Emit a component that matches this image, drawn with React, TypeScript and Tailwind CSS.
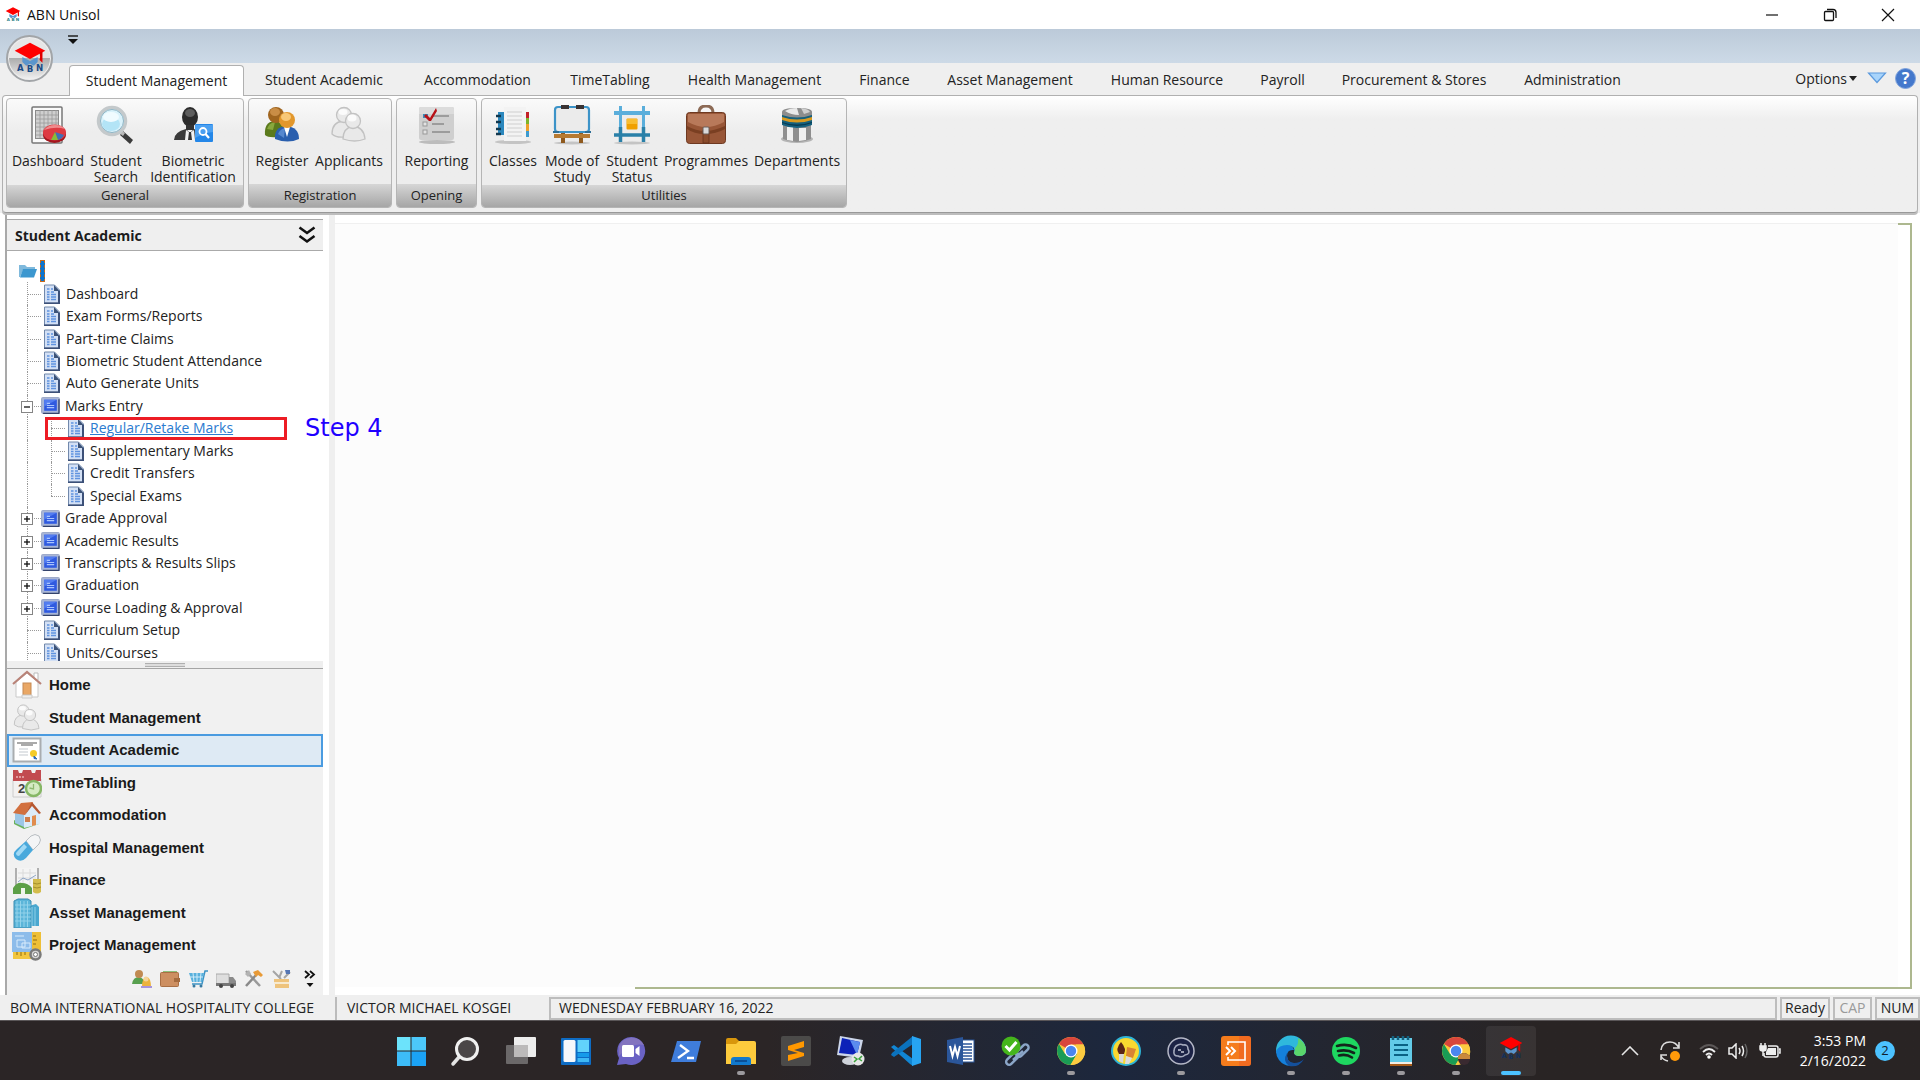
import React, { ReactNode } from "react";

const UI = "font-['Open_Sans','Noto_Sans',sans-serif]";

/* ---------- brand ---------- */

function CapLogo({ className, letters = "#1b4a86" }: { className: string; letters?: string }) {
  return (
    <svg viewBox="0 0 48 48" className={className} aria-hidden="true">
      <path d="M16 22l8 4 8-4v5l-4 4-4-2-4 2-4-4z" fill="#5b95cc" />
      <path d="M24 7L40 15.500 24 24 8 15.500z" fill="#ff0000" />
      <path d="M34 17q1 5 0 8l3 3V16z" fill="#e00000" />
      <g fontSize="9" fontWeight="bold" fontFamily="DejaVu Sans, sans-serif" fill={letters} textAnchor="middle">
        <text x="14" y="36">A</text>
        <text x="24" y="38">B</text>
        <text x="34" y="36">N</text>
      </g>
    </svg>
  );
}

/* ---------- ribbon icons (40 x 40) ---------- */

function Svg40({ children }: { children: ReactNode }) {
  return (
    <svg viewBox="0 0 40 40" className="size-10" aria-hidden="true">
      {children}
    </svg>
  );
}

const DashboardIcon = () => (
  <Svg40>
    <rect x="4" y="2" width="30" height="36" rx="1" fill="#fafafa" stroke="#777" strokeWidth="1.500" />
    <rect x="7.500" y="5.500" width="23" height="28" fill="#cfcfcf" stroke="#8a8a8a" />
    <path d="M12 5v28M16 5v28M20 5v28M24 5v28M28 5v28M8 10h22M8 14h22M8 18h22M8 22h22M8 26h22M8 30h22" stroke="#9b9b9b" strokeWidth=".8" />
    <ellipse cx="26.500" cy="29.500" rx="11.500" ry="8.500" fill="#a3161e" />
    <ellipse cx="26.500" cy="27.500" rx="11.500" ry="8" fill="#dd3a42" />
    <path d="M16 25q4-5 11-5 7 0 10 4-9-3-21 1z" fill="#f08a8c" />
    <path d="M27 27l9 3q-2 4-6 5z" fill="#3f6fb5" />
    <path d="M27 27l3 8h-7z" fill="#86bb3a" />
  </Svg40>
);

const SearchIcon = () => (
  <Svg40>
    <path d="M27 26l10 9-3 4-10-9z" fill="#3b3b3b" />
    <path d="M24 24l5 4-2 3-5-4z" fill="#b9b9b9" />
    <circle cx="16" cy="16" r="13.500" fill="#d9f2fb" stroke="#c4c9cb" strokeWidth="3.500" />
    <circle cx="16" cy="16" r="11.500" fill="none" stroke="#8fb4c4" />
    <ellipse cx="15" cy="19" rx="9" ry="7" fill="#b3e4f6" />
    <ellipse cx="15" cy="12" rx="8" ry="5" fill="#f0fbff" />
  </Svg40>
);

const BiometricIcon = () => (
  <Svg40>
    <ellipse cx="17" cy="12" rx="8" ry="10" fill="#2c2c2c" />
    <ellipse cx="17" cy="8" rx="5" ry="4" fill="#5e5e5e" />
    <path d="M13 20h8v5h-8z" fill="#333" />
    <path d="M1 35q0-8 12-11l4 4 4-4q12 3 12 11z" fill="#3a3a3a" />
    <path d="M13 25l4 3 4-3 1 10h-10z" fill="#f2f2f2" />
    <path d="M16 27h2l1 8h-4z" fill="#333" />
    <rect x="22" y="19" width="18" height="18" rx="1" fill="#2487e8" />
    <path d="M22 20l18 0v7q-9 1-18 6z" fill="#4ba0f1" />
    <circle cx="30" cy="26.500" r="3.500" fill="none" stroke="#fff" strokeWidth="1.800" />
    <path d="M32.500 29l3.500 4" stroke="#fff" strokeWidth="2.200" />
  </Svg40>
);

const RegisterIcon = () => (
  <Svg40>
    <path d="M3 30q-1-13 9-14 9 0 12 10l-8 6q-10 1-13-2z" fill="#5b7a1c" />
    <path d="M5 24q2-6 8-7l-2 8z" fill="#88a83c" />
    <circle cx="14" cy="10" r="8" fill="#a0651f" />
    <ellipse cx="13" cy="7" rx="5" ry="4" fill="#c98d46" />
    <path d="M13 34q-1-12 11-13 13 1 13 13-11 5-24 0z" fill="#2a5fae" />
    <path d="M16 29q2-5 7-6l-1 10z" fill="#5688cf" />
    <path d="M22 22h6l-3 10z" fill="#fff" />
    <circle cx="25" cy="15" r="8" fill="#e2972c" />
    <ellipse cx="24" cy="12" rx="5" ry="4" fill="#f8c878" />
  </Svg40>
);

function PeopleOutline({ className }: { className: string }) {
  return (
    <svg viewBox="0 0 40 40" className={className} aria-hidden="true">
      <g fill="#e9e9e9" stroke="#c2c2c2" strokeWidth="1.300">
        <path d="M3 29q0-12 11-13 9 1 11 11l-9 5q-9 1-13-3z" />
        <circle cx="15" cy="10" r="7.500" />
        <path d="M14 34q0-11 10-13 11 1 12 13-10 4-22 0z" />
        <circle cx="24" cy="16" r="7.500" />
      </g>
      <ellipse cx="23" cy="13" rx="4.500" ry="3.500" fill="#fbfbfb" />
      <ellipse cx="14" cy="7" rx="4.500" ry="3" fill="#fbfbfb" />
    </svg>
  );
}

const ReportingIcon = () => (
  <Svg40>
    <ellipse cx="20" cy="37" rx="18" ry="2" fill="#bcbcbc" />
    <rect x="2" y="2" width="35" height="33" rx="2" fill="#cfcfcf" />
    <path d="M2 4q0-2 2-2h31q2 0 2 2v5H2z" fill="#dcdcdc" />
    <path d="M15 11h17M15 19h12M15 27h18" stroke="#9c9c9c" strokeWidth="2" />
    <rect x="6" y="9" width="5" height="4" fill="#3d8ab5" />
    <rect x="6" y="17" width="4" height="4" fill="#e2e2e2" stroke="#999" />
    <rect x="6" y="25" width="4" height="4" fill="#e2e2e2" stroke="#999" />
    <path d="M9 9l4 4 6-10 1 3-6 10h-2l-5-5z" fill="#b81218" />
  </Svg40>
);

const ClassesIcon = () => (
  <Svg40>
    <ellipse cx="20" cy="37" rx="18" ry="2" fill="#c4c4c4" />
    <rect x="5" y="7" width="8" height="23" fill="#2b87bd" />
    <rect x="11" y="2" width="22" height="34" fill="#f3f3f3" />
    <path d="M14 7h15M14 11h15M14 15h15M14 19h15M14 23h15M14 27h15M14 31h15" stroke="#cfcfcf" />
    <path d="M3 11h5M3 17h5M3 24h5M3 29h5" stroke="#12384f" strokeWidth="2.500" />
    <path d="M33 7h3v6h-3z" fill="#c32128" />
    <path d="M33 13h3v6h-3z" fill="#7db52c" />
    <path d="M33 19h3v7h-3z" fill="#efa02a" />
    <path d="M33 26h3v6h-3z" fill="#3e9bd0" />
  </Svg40>
);

const ModeIcon = () => (
  <Svg40>
    <ellipse cx="20" cy="38" rx="18" ry="1.500" fill="#c4c4c4" />
    <path d="M9 28h4v10H9zM27 28h4v10h-4z" fill="#8f5a1e" />
    <path d="M2 29h36v4H2z" fill="#b67a32" />
    <rect x="3" y="2" width="34" height="25" rx="3" fill="#ebebeb" stroke="#3c93c8" strokeWidth="2.200" />
    <path d="M9 0h8v4H9zM24 0h8v4h-8z" fill="#3a3333" />
    <path d="M1 26h6v2H1zM33 26h6v2h-6z" fill="#2d6e96" />
  </Svg40>
);

const StatusIcon = () => (
  <Svg40>
    <ellipse cx="20" cy="38" rx="18" ry="1.500" fill="#c4c4c4" />
    <rect x="10" y="9" width="20" height="20" fill="#ececec" />
    <path d="M8.500 1v36M31.500 1v36" stroke="#5aaedb" strokeWidth="3" />
    <path d="M2 8h36" stroke="#5aaedb" strokeWidth="4" />
    <path d="M2 30h36M8.500 22v15M31.500 22v15" stroke="#2a80a8" strokeWidth="3.500" />
    <rect x="14.500" y="13.500" width="11" height="11" rx="1" fill="#f0a000" />
    <path d="M15 14h10v5H15z" fill="#f8bd30" />
  </Svg40>
);

const ProgrammesIcon = () => (
  <Svg40>
    <path d="M13 8q0-7 7-7t7 7" fill="none" stroke="#8c6a55" strokeWidth="3" />
    <rect x=".5" y="7.500" width="39" height="31" rx="3" fill="#985637" stroke="#6e3921" />
    <path d="M2 9h36v8q-18 10-36 0z" fill="#b8795a" />
    <path d="M1 21q9 5 18 5t20-5v3q-9 5-20 5T1 24z" fill="#7a3f22" />
    <path d="M17 25h6v13h-6z" fill="#8a4c2c" stroke="#5e2f1b" strokeWidth=".7" />
    <rect x="17" y="22" width="6" height="7" rx="1" fill="#d9d9d9" stroke="#6a5f5a" />
  </Svg40>
);

const DepartmentsIcon = () => (
  <Svg40>
    <ellipse cx="20" cy="34" rx="16" ry="4" fill="#b5b5b5" />
    <path d="M6 20h28v14q-14 6-28 0z" fill="#8f8f8f" />
    <path d="M10 22h6v14l-6-1zM22 23h7v12l-7 1z" fill="#f0f0f0" />
    <path d="M5 9h30v11q-15 6-30 0z" fill="#14607e" />
    <path d="M5 12q15 5 30 0v3q-15 5-30 0z" fill="#d99a20" />
    <path d="M5 17q15 5 30 0v1q-15 6-30 0z" fill="#083b52" />
    <path d="M5 7q0-4 15-4t15 4v3q-15 5-30 0z" fill="#8d8d8d" />
    <path d="M8 6q5-3 12-3l2 7q-8 0-14-4z" fill="#e9e9e9" />
    <path d="M24 3q8 1 9 4l-6 2z" fill="#cfcfcf" />
  </Svg40>
);

type Tool = { label: string; width: string; icon: ReactNode };
type Group = { name: string; tools: Tool[] };

const groups: Group[] = [
  {
    name: "General",
    tools: [
      { label: "Dashboard", width: "w-[74px]", icon: <DashboardIcon /> },
      { label: "Student Search", width: "w-[62px]", icon: <SearchIcon /> },
      { label: "Biometric Identification", width: "w-[92px]", icon: <BiometricIcon /> },
    ],
  },
  {
    name: "Registration",
    tools: [
      { label: "Register", width: "w-[58px]", icon: <RegisterIcon /> },
      { label: "Applicants", width: "w-[76px]", icon: <PeopleOutline className="size-10" /> },
    ],
  },
  { name: "Opening", tools: [{ label: "Reporting", width: "w-[71px]", icon: <ReportingIcon /> }] },
  {
    name: "Utilities",
    tools: [
      { label: "Classes", width: "w-[54px]", icon: <ClassesIcon /> },
      { label: "Mode of Study", width: "w-[64px]", icon: <ModeIcon /> },
      { label: "Student Status", width: "w-[56px]", icon: <StatusIcon /> },
      { label: "Programmes", width: "w-[92px]", icon: <ProgrammesIcon /> },
      { label: "Departments", width: "w-[90px]", icon: <DepartmentsIcon /> },
    ],
  },
];

const tabs: { label: string; width: string }[] = [
  { label: "Student Academic", width: "w-[158px]" },
  { label: "Accommodation", width: "w-[149px]" },
  { label: "TimeTabling", width: "w-[116px]" },
  { label: "Health Management", width: "w-[173px]" },
  { label: "Finance", width: "w-[87px]" },
  { label: "Asset Management", width: "w-[164px]" },
  { label: "Human Resource", width: "w-[150px]" },
  { label: "Payroll", width: "w-[81px]" },
  { label: "Procurement & Stores", width: "w-[182px]" },
  { label: "Administration", width: "w-[135px]" },
];

function TitleBar() {
  return (
    <header className="flex h-[29px] items-center bg-white">
      <CapLogo className="ml-0.5 size-[22px]" letters="#2a7f86" />
      <h1 className="ml-[3px] flex-1 text-[14px] text-[#111]">ABN Unisol</h1>
      <button aria-label="Minimize" className="flex w-[58px] justify-center">
        <svg viewBox="0 0 14 14" className="size-3.5"><path d="M1 7h12" stroke="#111" strokeWidth="1.200" /></svg>
      </button>
      <button aria-label="Restore" className="flex w-[58px] justify-center">
        <svg viewBox="0 0 14 14" className="size-3.5" fill="none" stroke="#111" strokeWidth="1.300">
          <rect x="1.500" y="3.500" width="9" height="9" rx="1" />
          <path d="M4 1.500h6q3 0 3 3V10" />
        </svg>
      </button>
      <button aria-label="Close" className="mr-[3px] flex w-[58px] justify-center">
        <svg viewBox="0 0 14 14" className="size-3.5"><path d="M1 1l12 12M13 1L1 13" stroke="#111" strokeWidth="1.200" /></svg>
      </button>
    </header>
  );
}

function Ribbon() {
  return (
    <div className="bg-[#efefef] text-[14px] text-[#222]">
      <div className="relative h-[34px] bg-linear-to-b from-[#bccad9] to-[#cddae7]">
        <button
          aria-label="Application menu"
          className="absolute top-[6px] left-[6px] z-10 flex size-[47px] items-center justify-center rounded-full border-2 border-[#a2a5a8] bg-linear-to-b from-[#e6e6e6] from-50% via-[#adadad] via-50% to-[#f3f3f3] shadow-[inset_0_0_0_1px_#eee]"
        >
          <CapLogo className="size-[46px] shrink-0" />
        </button>
        <button aria-label="Customize quick access" className="absolute top-[6px] left-[67px]">
          <svg viewBox="0 0 12 9" className="h-[9px] w-3"><path d="M1 1h10" stroke="#222" strokeWidth="1.500" /><path d="M1 4h10L6 9z" fill="#111" /></svg>
        </button>
      </div>
      <nav aria-label="Modules" className="flex h-8 items-end pr-1 pl-[69px]">
        <button className="relative z-10 mr-px -mb-px h-[31px] w-[175px] shrink-0 rounded-t border border-b-0 border-[#b0b0b0] bg-white pb-0.5 whitespace-nowrap">
          Student Management
        </button>
        {tabs.map((t) => (
          <button key={t.label} className={`h-[30px] shrink-0 pb-0.5 whitespace-nowrap ${t.width}`}>
            {t.label}
          </button>
        ))}
        <div className="mb-1 ml-auto flex h-[26px] items-center">
          <button className="flex items-center whitespace-nowrap">
            Options
            <svg viewBox="0 0 8 5" className="ml-0.5 h-[5px] w-2"><path d="M0 0h8L4 5z" fill="#222" /></svg>
          </button>
          <button aria-label="Collapse ribbon" className="ml-2.5">
            <svg viewBox="0 0 20 12" className="h-3 w-5"><path d="M1.500 1h17L10 10.500z" fill="#a8d4fb" stroke="#5c9ade" strokeWidth="1.200" /></svg>
          </button>
          <button
            aria-label="Help"
            className="ml-2 flex size-[21px] items-center justify-center rounded-full border border-[#7fa3dc] bg-[#4478cc] text-[16px] leading-none font-bold text-white"
          >
            ?
          </button>
        </div>
      </nav>
      <div className="mx-0.5 flex gap-1 rounded border border-[#b0b0b0] border-b-[#999] bg-linear-to-b from-white to-[#efefef] to-20% px-[3px] pt-0.5 pb-1 shadow-[0_2px_0_#bdbdbd]">
        {groups.map((g) => (
          <section key={g.name} aria-label={g.name} className="flex h-[110px] flex-col overflow-hidden rounded border border-[#b5b5b5] bg-linear-to-b from-[#fafafa] to-[#ededed] to-30%">
            <div className="flex flex-1 items-start px-1 pt-1.5">
              {g.tools.map((t) => (
                <button key={t.label} className={`flex flex-col items-center leading-4 ${t.width}`}>
                  {t.icon}
                  <span className="mt-2">{t.label}</span>
                </button>
              ))}
            </div>
            <h2 className="flex h-[23px] items-center justify-center bg-linear-to-b from-[#d6d6d6] to-[#a6a6a6] text-[13px]">{g.name}</h2>
          </section>
        ))}
      </div>
    </div>
  );
}

/* ---------- tree ---------- */

type Node = { label: string; kind: "doc" | "plus" | "minus"; child?: boolean; lastChild?: boolean; marked?: boolean };

const nodes: Node[] = [
  { label: "Dashboard", kind: "doc" },
  { label: "Exam Forms/Reports", kind: "doc" },
  { label: "Part-time Claims", kind: "doc" },
  { label: "Biometric Student Attendance", kind: "doc" },
  { label: "Auto Generate Units", kind: "doc" },
  { label: "Marks Entry", kind: "minus" },
  { label: "Regular/Retake Marks", kind: "doc", child: true, marked: true },
  { label: "Supplementary Marks", kind: "doc", child: true },
  { label: "Credit Transfers", kind: "doc", child: true },
  { label: "Special Exams", kind: "doc", child: true, lastChild: true },
  { label: "Grade Approval", kind: "plus" },
  { label: "Academic Results", kind: "plus" },
  { label: "Transcripts & Results Slips", kind: "plus" },
  { label: "Graduation", kind: "plus" },
  { label: "Course Loading & Approval", kind: "plus" },
  { label: "Curriculum Setup", kind: "doc" },
  { label: "Units/Courses", kind: "doc" },
];

const DocIcon = () => (
  <svg viewBox="0 0 18 20" className="ml-1 h-5 w-[18px] shrink-0" aria-hidden="true">
    <path d="M1.500 1h10l5 5v13h-15z" fill="#d3e0f5" stroke="#7188ab" />
    <path d="M16 7v12.500H1" fill="none" stroke="#3c5078" strokeWidth="2" />
    <path d="M11 1l5.500 6H11z" fill="#3c5378" />
    <path d="M4 5h2.500M8 5h2M4 8h2.500M8 8h3M4 10.500h2.500M8 10.500h5M4 13h2.500M8 13h5M4 15.500h2.500M8 15.500h5" stroke="#5f92df" strokeWidth="1.300" />
  </svg>
);

const BookIcon = () => (
  <svg viewBox="0 0 18 16" className="ml-0.5 h-[17px] w-[19px] shrink-0" aria-hidden="true">
    <rect x=".5" y=".5" width="17" height="15" rx="1.500" fill="#a9b6d6" stroke="#9fabc9" />
    <path d="M17 2v13.500H2" fill="none" stroke="#34436b" strokeWidth="1.200" />
    <rect x="3" y="2.500" width="12" height="10.500" fill="#2f5ae0" />
    <path d="M3 2.500h12L3 9z" fill="#527cf0" />
    <path d="M5.500 6h3M5.500 8h7M5.500 10h7" stroke="#a9c4ff" strokeWidth="1.100" />
  </svg>
);

function Guide({ stub, half, children }: { stub: boolean; half?: boolean; children?: ReactNode }) {
  return (
    <span className="relative flex w-6 shrink-0 items-center justify-center self-stretch">
      <span className={`absolute top-0 left-3 border-l border-dotted border-[#999] ${half ? "h-1/2" : "h-full"}`} />
      {stub && <span className="absolute top-1/2 left-3 w-[14px] border-t border-dotted border-[#999]" />}
      {children}
    </span>
  );
}

function TreeRow({ n }: { n: Node }) {
  return (
    <li className="relative flex items-center">
      <Guide stub={!n.child}>
        {n.kind !== "doc" && (
          <button aria-label={n.kind === "plus" ? "Expand" : "Collapse"} className="relative mt-0.5 flex size-3 items-center justify-center border border-[#858585] bg-white">
            <svg viewBox="0 0 8 8" className="size-2" stroke="#111" strokeWidth="1.300">
              <path d="M1 4h6" />
              {n.kind === "plus" && <path d="M4 1v6" />}
            </svg>
          </button>
        )}
      </Guide>
      {n.child && <Guide stub half={n.lastChild} />}
      {n.kind === "doc" ? <DocIcon /> : <BookIcon />}
      <a href="#" className={`ml-[5px] whitespace-nowrap ${n.marked ? "text-[#2b7bd0] underline" : ""}`}>{n.label}</a>
      {n.marked && (
        <>
          <span className="absolute top-0 left-[30px] h-full w-[242px] border-3 border-[#ed1c24]" />
          <span className="absolute top-1/2 left-[290px] -translate-y-1/2 font-['DejaVu_Sans',sans-serif] text-[24px] leading-6 whitespace-nowrap text-[#1f00ff]">
            Step 4
          </span>
        </>
      )}
    </li>
  );
}

/* ---------- side navigation icons (30 x 30) ---------- */

function Svg30({ children }: { children: ReactNode }) {
  return (
    <svg viewBox="0 0 30 30" className="size-[30px]" aria-hidden="true">
      {children}
    </svg>
  );
}

const navItems: { label: string; icon: ReactNode; active?: boolean }[] = [
  {
    label: "Home",
    icon: (
      <Svg30>
        <path d="M22 3h4v7h-4z" fill="#fff" stroke="#bbb" />
        <path d="M4 12L15 3l11 9v15H4z" fill="#fff" stroke="#c9c9c9" />
        <path d="M1 14L15 2l14 12" fill="none" stroke="#b98378" strokeWidth="2.200" />
        <rect x="11" y="13" width="8" height="12" fill="#e9a765" stroke="#c58a55" />
        <path d="M10 25h10v3H10z" fill="#eee" stroke="#ccc" />
      </Svg30>
    ),
  },
  { label: "Student Management", icon: <PeopleOutline className="size-[30px]" /> },
  {
    label: "Student Academic",
    active: true,
    icon: (
      <Svg30>
        <rect x="1.500" y="3.500" width="27" height="23" fill="#fff" stroke="#a9adb0" strokeWidth="2" />
        <path d="M5 8h20M9 10h12" stroke="#8f8f8f" strokeWidth="1.500" />
        <path d="M7 14h9M7 17h9M7 20h9" stroke="#c3c9cf" />
        <circle cx="21.500" cy="18.500" r="3.500" fill="#f4cb28" />
        <path d="M22 21l3 3-3-.5z" fill="#2f6bb4" stroke="#2f6bb4" />
      </Svg30>
    ),
  },
  {
    label: "TimeTabling",
    icon: (
      <Svg30>
        <path d="M1 11h28v18H1z" fill="#f3f1f1" stroke="#ccc" />
        <path d="M1 2h5l1 3h3l1-3h8l1 3h3l1-3h5v11H1z" fill="#c24b50" />
        <path d="M4 9h9" stroke="#eab4b4" strokeWidth="1.500" strokeDasharray="2 1" />
        <text x="6" y="25" fontSize="13" fontFamily="Liberation Sans, sans-serif" fill="#444">2</text>
        <circle cx="21.500" cy="20.500" r="7.500" fill="#d5ebc3" stroke="#86b765" strokeWidth="2.500" />
        <path d="M21.500 16v5l-4-1" fill="none" stroke="#8db870" strokeWidth="1.300" />
      </Svg30>
    ),
  },
  {
    label: "Accommodation",
    icon: (
      <Svg30>
        <path d="M2 24l10 5 15-5v-3L13 26 2 20z" fill="#69b15c" />
        <path d="M3 13l9-2v16l-9-4z" fill="#9cc6e6" />
        <path d="M12 14l8-8 8 7v11l-16 4z" fill="#dcebf8" />
        <path d="M1 13L9 3l12-1-8 13z" fill="#d2703f" />
        <path d="M20 2l9 11-2 1-7-8-7 9z" fill="#b75730" />
        <path d="M13 17h5v5h-5z" fill="#cf7d4c" />
        <path d="M20 16l4-1v10l-4 1z" fill="#e08c4e" />
      </Svg30>
    ),
  },
  {
    label: "Hospital Management",
    icon: (
      <Svg30>
        <path d="M14 8l5-5q4-3 8 0 3 4 0 8l-6 6z" fill="#f4f5f6" stroke="#b9bec2" />
        <path d="M14 8l7 9-7 8q-5 5-10 1-5-5 1-10z" fill="#49a9dc" />
        <path d="M12 11l3 3-8 9q-3 0-3-3z" fill="#a0d9f5" />
      </Svg30>
    ),
  },
  {
    label: "Finance",
    icon: (
      <Svg30>
        <path d="M4 2h22v20H4z" fill="#f4f4f4" />
        <path d="M4 2v20M26 2v18" stroke="#999" strokeWidth="1.500" />
        <path d="M6 7h18M6 12h18M11 3v15M18 3v15" stroke="#dadada" />
        <path d="M6 16l5-4 5 2 8-5" fill="none" stroke="#8ca4c6" />
        <path d="M1 22q4-6 9-5 6 0 10 5v6H1z" fill="#5c9f46" />
        <path d="M9 22h4v6H9z" fill="#eef5ea" />
        <path d="M21 13h8v13q-4 3-8 0z" fill="#d4bc4b" />
        <path d="M21 17q4 2 8 0M21 21q4 2 8 0" stroke="#a68f28" fill="none" />
      </Svg30>
    ),
  },
  {
    label: "Asset Management",
    icon: (
      <Svg30>
        <path d="M17 8l7-2 3 3v19H17z" fill="#4aa7cf" />
        <path d="M2 3l4-2h10l3 2v27H2z" fill="#5bb5d9" stroke="#3a8bb0" />
        <path d="M5 3v26M8.500 3v26M12 3v26M15.500 3v26M3 7h16M3 11h16M3 15h16M3 19h16M3 23h16" stroke="#97d5ec" strokeWidth=".9" />
        <path d="M20 9v19M23 9v19" stroke="#8fd0e8" />
      </Svg30>
    ),
  },
  {
    label: "Project Management",
    icon: (
      <Svg30>
        <rect y="1" width="29" height="20" fill="#8dbcea" />
        <path d="M3 5h9M5 9h8v7H5zM10 12h8v5h-8z" fill="none" stroke="#d8ebfb" />
        <path d="M20 1h9v20h-9z" fill="#eebf36" />
        <path d="M1 21h20v7H1z" fill="#f2c63f" />
        <path d="M21 5h3M21 9h4M21 13h3M5 21v3M9 21v4M13 21v3" stroke="#8d6c10" />
        <circle cx="23.500" cy="23.500" r="5" fill="#d5d5d5" stroke="#7a7a7a" strokeWidth="2.500" />
        <circle cx="23.500" cy="23.500" r="2" fill="#fff" stroke="#777" />
      </Svg30>
    ),
  },
];

const quick: { label: string; art: ReactNode }[] = [
  {
    label: "Human Resource",
    art: (
      <>
        <path d="M0 15q1-7 7-7 5 1 6 7z" fill="#58a04f" />
        <circle cx="7" cy="5" r="4" fill="#c08a52" />
        <path d="M10 18q0-10 5-10 4 1 4 10z" fill="#edb33e" />
        <circle cx="14" cy="10" r="2.500" fill="#f5d398" />
        <path d="M9 17h11v2H9z" fill="#a794dc" />
      </>
    ),
  },
  {
    label: "Payroll",
    art: (
      <>
        <path d="M3 2h14v3H3z" fill="#8cc07c" />
        <rect x=".5" y="3.500" width="18" height="14" rx="1" fill="#cd8f61" stroke="#a96f45" />
        <path d="M14 9h6v4h-6z" fill="#a56b3f" />
      </>
    ),
  },
  {
    label: "Procurement",
    art: (
      <>
        <path d="M20 2h-3l-3 13H4" fill="none" stroke="#3d93c4" strokeWidth="1.500" />
        <path d="M1 4h15l-2 9H4z" fill="#58b0dc" />
        <path d="M5 4l1 9M9 4v9M13 4l-1 9M2 8h13" stroke="#cdeaf8" />
        <circle cx="6" cy="17" r="1.500" fill="#3779a0" />
        <circle cx="13" cy="17" r="1.500" fill="#3779a0" />
      </>
    ),
  },
  {
    label: "Transport",
    art: (
      <>
        <path d="M0 5h13v11H0z" fill="#dedede" stroke="#aaa" />
        <path d="M13 8h4l3 4v5h-7z" fill="#8b8b8b" />
        <path d="M0 14h20v3H0z" fill="#777" />
        <circle cx="5" cy="17" r="2" fill="#444" />
        <circle cx="16" cy="17" r="2" fill="#444" />
      </>
    ),
  },
  {
    label: "Tools",
    art: (
      <>
        <path d="M2 2l14 15" stroke="#9a9a9a" strokeWidth="2.500" />
        <path d="M1 5l4-4 2 4-3 3z" fill="#b3b3b3" />
        <path d="M2 17L13 5" stroke="#8a8a8a" strokeWidth="2.500" />
        <path d="M9 3l5-2 5 5-2 2-3-2-2 2z" fill="#e89a37" />
      </>
    ),
  },
  {
    label: "Settings",
    art: (
      <>
        <path d="M1 2l8 8M10 2L7 9M18 3l-6 6" stroke="#a5a5a5" strokeWidth="2" />
        <path d="M13 1h5v4h-4z" fill="#5677b4" />
        <path d="M2 10h15v3H2zM3 15h14v4H3z" fill="#eec37c" />
        <path d="M2 13h15v2H2z" fill="#f7ead0" />
      </>
    ),
  },
];

function Sidebar() {
  return (
    <aside className="relative z-10 ml-[5px] flex w-[318px] shrink-0 flex-col border-l-2 border-[#a9a9a9] bg-white">
      <div className="mt-1 flex h-8 shrink-0 items-center justify-between border-y border-[#aaa] bg-[#efefef] pr-[7px] pl-2">
        <h2 className="text-[14px] font-bold text-[#1c1c1c]">Student Academic</h2>
        <button aria-label="Collapse panel">
          <svg viewBox="0 0 18 18" className="size-[18px]" fill="none" stroke="#111" strokeWidth="2.600"><path d="M1.500 1.500L9 7l7.500-5.500M1.500 10L9 15.500l7.500-5.500" /></svg>
        </button>
      </div>
      <div className="min-h-0 flex-1 overflow-x-visible overflow-y-clip pt-[9px] pl-2">
        <ul className="grid h-[404px] auto-rows-fr text-[14px] leading-5 text-[#222]">
          <li className="flex items-center">
            <svg viewBox="0 0 20 14" className="ml-[3px] h-3.5 w-5" aria-hidden="true">
              <path d="M1 1h6l2 2h8v3H5L2 13H1z" fill="#7fb9dc" />
              <path d="M5 5h14l-3 8.500H2z" fill="#3c97cf" />
            </svg>
            <span className="ml-0.5 h-full w-[5px] border border-dashed border-[#c66a1c] bg-[#0b74cf]" />
          </li>
          {nodes.map((n) => (
            <TreeRow key={n.label} n={n} />
          ))}
        </ul>
      </div>
      <div className="relative z-10 flex h-2 shrink-0 items-center justify-center border-b border-[#a5a5a5] bg-[#efefef]">
        <span className="h-1 w-10 border-y border-[#b0b0b0] bg-[#ddd]" />
      </div>
      <nav aria-label="Navigation" className="grid h-[293px] shrink-0 auto-rows-fr bg-[#f1f1f1] font-['Liberation_Sans',Arial,sans-serif] text-[15px] font-bold text-[#1a1a1a]">
        {navItems.map((i) => (
          <button
            key={i.label}
            className={`flex items-center gap-[7px] pl-[5px] text-left ${i.active ? "bg-[#deeaf4] ring-2 ring-[#4a9be0] ring-inset" : ""}`}
          >
            {i.icon}
            {i.label}
          </button>
        ))}
      </nav>
      <div className="flex h-[33px] shrink-0 items-center justify-end gap-2 bg-[#f1f1f1] pr-[7px]">
        {quick.map((q) => (
          <button key={q.label} aria-label={q.label}>
            <svg viewBox="0 0 20 20" className="size-5">{q.art}</svg>
          </button>
        ))}
        <button aria-label="More modules" className="ml-1">
          <svg viewBox="0 0 12 18" className="h-[18px] w-3" fill="none" stroke="#111" strokeWidth="1.800"><path d="M1 1l4 3.500L1 8M6 1l4 3.500L6 8" /><path d="M2.500 13h7L6 17z" fill="#111" stroke="none" /></svg>
        </button>
      </div>
    </aside>
  );
}

function StatusBar() {
  return (
    <footer className="flex h-[25px] shrink-0 items-stretch gap-[3px] bg-[#efefef] text-[14px] whitespace-nowrap text-[#222]">
      <div className="mt-0.5 w-[337px] border-r-2 border-[#bbb] pl-2.5 leading-[22px]">BOMA INTERNATIONAL HOSPITALITY COLLEGE</div>
      <div className="mt-0.5 w-[206px] pl-[7px] leading-[22px]">VICTOR MICHAEL KOSGEI</div>
      <div className="mt-0.5 flex-1 border-2 border-[#bdbdbd] pl-2 leading-[18px]">WEDNESDAY FEBRUARY 16, 2022</div>
      <div className="mt-0.5 w-[50px] border-2 border-[#bdbdbd] text-center leading-[18px]">Ready</div>
      <div className="mt-0.5 w-[39px] border-2 border-[#bdbdbd] text-center leading-[18px] text-[#9a9a9a]">CAP</div>
      <div className="mt-0.5 w-[45px] border-2 border-[#bdbdbd] text-center leading-[18px]">NUM</div>
    </footer>
  );
}

/* ---------- taskbar ---------- */

const chromeArt = (
  <>
    <circle cx="15" cy="15" r="14" fill="#fbc83c" />
    <path d="M15 15L3 8A14 14 0 0 1 27.500 8.500H15z" fill="#d9463c" />
    <path d="M2.900 8A14 14 0 0 0 14.500 29L21 18 15 15 9 18z" fill="#1a9c55" />
    <path d="M27.500 8.500A14 14 0 0 1 14.500 29L21 18l-1-9.500z" fill="#fccb40" />
    <circle cx="15" cy="15" r="6.500" fill="#fff" />
    <circle cx="15" cy="15" r="5.200" fill="#4a86ef" />
  </>
);

const apps: { label: string; art: ReactNode; open?: boolean; active?: boolean }[] = [
  {
    label: "Start",
    art: (
      <>
        <path d="M1 1h13.500v13.500H1z" fill="#6ce3fb" />
        <path d="M15.500 1H30v13.500H15.500z" fill="#4cc8fa" />
        <path d="M1 15.500h13.500V30H1z" fill="#3dbcf8" />
        <path d="M15.500 15.500H30V30H15.500z" fill="#1ba3f6" />
      </>
    ),
  },
  {
    label: "Search",
    art: (
      <>
        <path d="M9 20l-7 8" stroke="#e4e4e4" strokeWidth="3.500" strokeLinecap="round" />
        <circle cx="16" cy="13" r="10.500" fill="#4a4647" stroke="#f0f0f0" strokeWidth="3" />
      </>
    ),
  },
  {
    label: "Task view",
    art: (
      <>
        <rect y="9" width="22" height="19" rx="1" fill="#6b6869" />
        <rect x="8" y="1" width="22" height="20" rx="1" fill="#ededed" />
        <path d="M8 9h14v12H8z" fill="#bcbaba" />
      </>
    ),
  },
  {
    label: "Widgets",
    art: (
      <>
        <rect y="2" width="30" height="27" rx="1" fill="#0e6cc4" />
        <rect x="2.500" y="4" width="12" height="22" rx="1.500" fill="#f5f7fa" />
        <path d="M16.500 4H28v12H16.500z" fill="#62d3fb" />
        <path d="M16.500 17H28v4H16.500z" fill="#169bea" />
        <path d="M16.500 22H28v4H16.500z" fill="#3fb9f4" />
      </>
    ),
  },
  {
    label: "Chat",
    art: (
      <>
        <path d="M15 1a14 14 0 1 1-5 27L1 29l2-7A14 14 0 0 1 15 1z" fill="#6a62c4" />
        <path d="M3 10A14 14 0 0 1 28 9Q15 6 3 20z" fill="#8374bf" />
        <rect x="6" y="9" width="12" height="12" rx="1.500" fill="#fff" />
        <path d="M19.500 13l4-3v10l-4-3z" fill="#fff" />
      </>
    ),
  },
  {
    label: "PowerShell",
    art: (
      <>
        <path d="M6 5h24l-5 21H0z" fill="#3f7ddb" />
        <path d="M9 9l8 6-10 7M16 22h7" fill="none" stroke="#fff" strokeWidth="2.300" />
      </>
    ),
  },
  {
    label: "File Explorer",
    open: true,
    art: (
      <>
        <path d="M0 4q0-2 2-2h8l3 3v6H0z" fill="#d8960c" />
        <path d="M0 8h10l3-3h15q2 0 2 2v21H0z" fill="#fdcb3d" />
        <path d="M5 29v-5q0-3 3-3h14q3 0 3 3v5z" fill="#1279cc" />
        <path d="M9 25h12" stroke="#0a4f96" strokeWidth="2" />
      </>
    ),
  },
  {
    label: "Sublime Text",
    art: (
      <>
        <rect width="30" height="30" rx="2" fill="#4b4a49" />
        <path d="M7 10l16-5v6l-10 3 10 3v3L7 25v-6l10-2-10-3z" fill="#ff9800" />
      </>
    ),
  },
  {
    label: "Remote Desktop",
    art: (
      <>
        <ellipse cx="14" cy="25" rx="8" ry="4" fill="#cfd3da" />
        <path d="M4 0l23 4-4 18L1 19z" fill="#ccd6ea" />
        <path d="M6 2l18 4-3 13L3 17z" fill="#0c22b8" />
        <path d="M14 4l10 2-3 13z" fill="#5b8bee" />
        <circle cx="22" cy="23" r="6.500" fill="#e6e6e6" />
        <path d="M18 21l3 2-3 3M26 20l-3 3 3 2" fill="none" stroke="#3aa23a" strokeWidth="1.500" />
      </>
    ),
  },
  {
    label: "Visual Studio Code",
    art: (
      <>
        <path d="M0 11l3-2 19 14v7l-3-2z" fill="#1186d4" />
        <path d="M22 0v8L3 21l-3-2 1-2z" fill="#0b72bd" />
        <path d="M21 0l9 3v24l-9 3z" fill="#27a4f2" />
      </>
    ),
  },
  {
    label: "Word",
    art: (
      <>
        <rect x="12" y="4" width="16" height="22" fill="#fff" stroke="#2b569a" />
        <path d="M16 8h10M16 11h10M16 14h10M16 17h10M16 20h10M16 23h10" stroke="#2b569a" strokeWidth="1.300" />
        <path d="M1 4l16-3v28L1 26z" fill="#2b569a" />
        <path d="M4 10l2.500 10L9 11l2.500 9L14 10" fill="none" stroke="#fff" strokeWidth="2" />
      </>
    ),
  },
  {
    label: "Link Checker",
    art: (
      <>
        <g fill="none" stroke="#8ba6c8" strokeWidth="2.500">
          <rect x="14" y="12" width="15" height="6" rx="3" transform="rotate(-45 21 15)" />
          <rect x="4" y="20" width="15" height="6" rx="3" transform="rotate(-45 11 23)" />
          <path d="M12 24l10-9" />
        </g>
        <circle cx="10" cy="10" r="9.500" fill="#45b51c" />
        <path d="M4.500 10l4 4 7-8" fill="none" stroke="#fff" strokeWidth="3" />
      </>
    ),
  },
  { label: "Chrome", art: chromeArt, open: true },
  {
    label: "Paint",
    art: (
      <>
        <circle cx="15" cy="15" r="14" fill="#f9d930" stroke="#2fb4d6" strokeWidth="2" />
        <path d="M10 6q6 7 3 12H8q-4-5 2-12z" fill="#5a2416" />
        <path d="M8 18h5l-1 9-4-2z" fill="#d8d8d8" />
        <path d="M16 11l9 2-3 9-7-2z" fill="#d98434" />
        <path d="M15 20l6 2-3 6h-4z" fill="#dcdcdc" />
      </>
    ),
  },
  {
    label: "Assistant",
    open: true,
    art: (
      <>
        <circle cx="15" cy="15" r="13" fill="#1c2346" stroke="#b4b7c6" strokeWidth="1.500" />
        <path d="M10 10q4-3 7-1 5-1 5 4 3 5-3 6-3 3-7 1-5 0-4-5 0-3 2-5z" fill="none" stroke="#a4a9bd" strokeWidth="1.600" />
        <path d="M12 14h3M15 16h3" stroke="#c6cad8" strokeWidth="1.500" />
      </>
    ),
  },
  {
    label: "Screen Share",
    art: (
      <>
        <rect width="30" height="30" rx="3" fill="#f57c1c" />
        <path d="M18 0h9q3 0 3 3v24q0 3-3 3h-9z" fill="#ee5a24" opacity=".5" />
        <path d="M7 9V6h17v18H7v-3" fill="none" stroke="#fff" strokeWidth="1.600" />
        <path d="M5 11l4 4-4 4M10 11l4 4-4 4" fill="none" stroke="#fff" strokeWidth="2" />
      </>
    ),
  },
  {
    label: "Edge",
    open: true,
    art: (
      <>
        <path d="M0 15A15 15 0 0 1 30 14q0 6-7 6-4 0-5-3 2-7-5-7Q3 10 0 18z" fill="#2fb8dc" />
        <path d="M22 2q8 5 8 12 0 6-7 6-4 0-5-3 1-2 1-5 4-3 3-10z" fill="#5bd66b" />
        <path d="M0 15q3-6 11-6 6 0 7 5-7-1-7 6 1 9 11 8Q10 33 3 24 0 20 0 15z" fill="#1480dc" />
        <path d="M11 17q-1 9 7 10 6 0 10-4-5 9-15 7-7-5-2-13z" fill="#14509c" />
      </>
    ),
  },
  {
    label: "Spotify",
    open: true,
    art: (
      <>
        <circle cx="15" cy="15" r="14" fill="#1ed760" />
        <path d="M6 10q10-3 19 2M7 15q9-2 16 2M8 19.500q7-2 13 2" fill="none" stroke="#14241b" strokeWidth="2.600" strokeLinecap="round" />
      </>
    ),
  },
  {
    label: "Notepad",
    open: true,
    art: (
      <>
        <path d="M4 27h22v3H4z" fill="#a85b18" />
        <path d="M4 25h22v3H4z" fill="#f3ede4" />
        <rect x="4" y="2" width="22" height="24" fill="#62cbe8" />
        <path d="M8 9h14M8 14h14M8 19h14" stroke="#0a6284" strokeWidth="2" />
        <path d="M7 0v4M12 0v4M17 0v4M22 0v4" stroke="#14627f" strokeWidth="2.500" />
      </>
    ),
  },
  {
    label: "Chrome profile",
    open: true,
    art: (
      <>
        {chromeArt}
        <circle cx="23" cy="23" r="6" fill="#3a2a30" />
        <path d="M17 20q6-6 12 0v3H17z" fill="#c9883c" />
      </>
    ),
  },
  { label: "ABN Unisol", art: null, active: true },
];

function Taskbar() {
  return (
    <div className="grid h-[60px] shrink-0 grid-cols-[1fr_auto_1fr] items-center border-t border-[#5a5658] bg-linear-to-r from-[#2b2526] from-40% via-[#1c273d] via-58% to-[#292424] to-80% text-white">
      <div />
      <div className="flex pl-0.5">
        {apps.map((a) => (
          <button key={a.label} aria-label={a.label} className="flex w-[55px] justify-center">
            <span className={`flex h-[50px] w-[50px] flex-col items-center justify-end rounded pb-px ${a.active ? "bg-white/7" : ""}`}>
              {a.active ? (
                <CapLogo className="size-[34px]" letters="#12305c" />
              ) : (
                <svg viewBox="0 0 30 30" className="size-[30px] overflow-visible" aria-hidden="true">{a.art}</svg>
              )}
              <span className={`mt-[5px] h-1 rounded-full ${a.active ? "w-5 bg-[#4cc2ff]" : a.open ? "w-2 bg-[#9c9a9e]" : "w-2"}`} />
            </span>
          </button>
        ))}
      </div>
      <div className="flex items-center justify-end pr-[25px]">
        <button aria-label="Hidden icons">
          <svg viewBox="0 0 18 10" className="h-2.5 w-[18px]" fill="none" stroke="#e5e5e5" strokeWidth="1.600"><path d="M1 9l8-8 8 8" /></svg>
        </button>
        <button aria-label="Update" className="ml-5">
          <svg viewBox="0 0 22 22" className="size-[22px]" fill="none" stroke="#ddd" strokeWidth="1.600">
            <path d="M2 10Q3 2 11 2q6 0 9 6M20 2v6h-6M2 20v-5h6M2 16q2 4 7 5" />
            <circle cx="16" cy="16" r="5" fill="#ff9a0a" stroke="none" />
          </svg>
        </button>
        <button aria-label="Network, volume and battery" className="ml-[18px] flex items-center gap-[9px]">
          <svg viewBox="0 0 20 16" className="h-4 w-5" fill="none" strokeWidth="1.800">
            <path d="M1 6q9-8 18 0" stroke="#5c5858" />
            <path d="M4 9q6-6 12 0M7 12q3-3 6 0" stroke="#eee" />
            <circle cx="10" cy="14" r="1.800" fill="#fff" />
          </svg>
          <svg viewBox="0 0 20 16" className="h-4 w-5" fill="none" stroke="#eee" strokeWidth="1.500">
            <path d="M1 5h3l4-4v14l-4-4H1zM11 5q2 3 0 6M14 3q3 5 0 10" />
            <path d="M17 1q4 7 0 14" stroke="#666" />
          </svg>
          <svg viewBox="0 0 22 16" className="ml-0.5 h-4 w-[22px]" fill="none" stroke="#eee" strokeWidth="1.500">
            <path d="M9 3h8q2 0 2 2v7q0 2-2 2H7q-2 0-2-2v-2" />
            <path d="M9 5h8v7H7V9z" fill="#eee" stroke="none" />
            <path d="M20 6h1v4h-1" />
            <path d="M1 3h6v3q0 2-3 2T1 6z" fill="#eee" />
            <path d="M2 0v3M6 0v3M4 8v5" />
          </svg>
        </button>
        <div className="ml-[17px] w-[68px] text-right text-[14px] leading-5 whitespace-nowrap">
          <div>3:53 PM</div>
          <div>2/16/2022</div>
        </div>
        <button aria-label="2 notifications" className="ml-[9px] flex size-5 items-center justify-center rounded-full bg-[#4cc2ff] text-[13px] text-[#10202c]">2</button>
      </div>
    </div>
  );
}

export default function App() {
  return (
    <div className={`flex h-screen flex-col overflow-hidden bg-white ${UI}`}>
      <TitleBar />
      <Ribbon />
      <div className="flex min-h-0 flex-1 pt-0.5">
        <Sidebar />
        <div className="ml-1.5 w-1.5 shrink-0 bg-[#efefef]" />
        <main className="mt-2 mr-2 mb-1.5 flex flex-1 flex-col border-r-2 border-[#adb88f]">
          <div className="flex flex-1">
            <div className="flex-1 border-t border-[#f0f0f0] bg-[#fcfcfc]" />
            <div className="w-3 border-t-2 border-[#adb88f]" />
          </div>
          <div className="ml-[300px] border-b-2 border-[#adb88f]" />
        </main>
      </div>
      <StatusBar />
      <Taskbar />
    </div>
  );
}
